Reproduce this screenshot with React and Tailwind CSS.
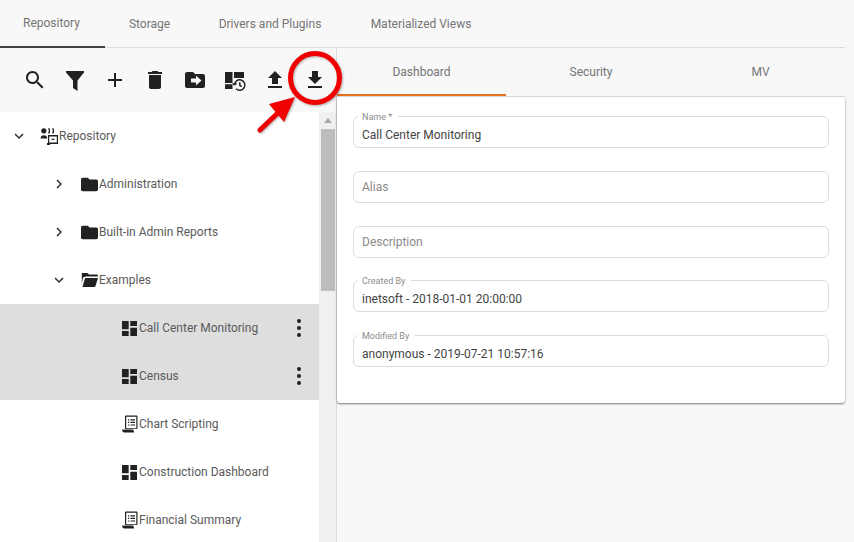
import React from "react";

const MaterialIcon = ({ d, size = 24, viewBox = "0 0 24 24", className = "" }) => (
  <svg width={size} height={size} viewBox={viewBox} fill="currentColor" fillRule="evenodd" className={className}>
    <path d={d} />
  </svg>
);

const paths = {
  search:
    "M15.5 14h-.79l-.28-.27C15.41 12.59 16 11.11 16 9.5 16 5.91 13.09 3 9.5 3S3 5.91 3 9.5 5.91 16 9.5 16c1.61 0 3.09-.59 4.23-1.57l.27.28v.79l5 4.99L20.49 19l-4.99-5zm-6 0C7.01 14 5 11.99 5 9.5S7.01 5 9.5 5 14 7.01 14 9.5 11.99 14 9.5 14z",
  filter: "M3 3h18v1.5L14.5 12.500V23L10 20V12.500L3 4.500z",
  add: "M19 13h-6v6h-2v-6H5v-2h6V5h2v6h6v2z",
  trash: "M6 19c0 1.1.9 2 2 2h8c1.1 0 2-.9 2-2V7H6v12zM19 4h-3.5l-1-1h-5l-1 1H5v2h14V4z",
  moveFolder:
    "M20 6h-8l-2-2H4c-1.1 0-1.99.9-1.99 2L2 18c0 1.1.9 2 2 2h16c1.1 0 2-.9 2-2V8c0-1.1-.9-2-2-2zm-7 11.500v-3H8v-4h5v-3l5.500 5z",
  upload: "M9 16h6v-6h4l-7-7-7 7h4zm-4 2h14v2H5z",
  download: "M19 9h-4V3H9v6H5l7 7 7-7zM5 18h14v2H5z",
  folder: "M10 4H4c-1.1 0-2 .9-2 2v12c0 1.1.9 2 2 2h16c1.1 0 2-.9 2-2V8c0-1.1-.9-2-2-2h-8l-2-2z",
  dashboard: "M3 13h8V3H3v10zm0 8h8v-6H3v6zm10 0h8V11h-8v10zm0-18v6h8V3h-8z",
  down: "M7.41 8.59L12 13.17l4.59-4.58L18 10l-6 6-6-6 1.41-1.41z",
  right: "M10 6L8.59 7.41 13.17 12l-4.58 4.59L10 18l6-6z",
};

const DashboardHistory = () => (
  <svg width="24" height="24" viewBox="0 0 24 24" fill="currentColor">
    <path d="M2 4h7.500v11H2zM2 16.200h7.500V21H2zM11 4h10v6H11z" />
    <path
      d="M11.500 17a5.200 5.200 0 1 1 1.600 3.800M11.500 17l-1.700-1.800M11.500 17l1.900-1.700M16.800 14.200v3.200l2 1.200"
      fill="none"
      stroke="currentColor"
      strokeWidth="1.5"
    />
  </svg>
);

const OpenFolder = () => (
  <svg width="17" height="14" viewBox="0 0 17 14" fill="currentColor">
    <path d="M1.5 0h5l1.5 1.500h7.500c.8 0 1.500.7 1.500 1.500v.5H5L2 4.500 0.800 11V1.200C.8.5 1 0 1.500 0z" />
    <path d="M4 5h13l-2.500 8c-.2.6-.6 1-1.200 1H1.500z" />
  </svg>
);

const RepositoryIcon = () => (
  <svg width="19" height="18" viewBox="0 0 19 18" fill="currentColor">
    <circle cx="3.800" cy="3.800" r="2.600" />
    <path d="M.6 11.500c0-2.200 1.500-3.300 3.200-3.300 1.800 0 3.400 1.100 3.400 3.300z" />
    <path d="M8.500 1.200c1.300 1 1.300 4.200 0 5.200M12.500 1.200c1.300 1 1.300 4.200 0 5.200" fill="none" stroke="currentColor" strokeWidth="1.400" />
    <path d="M9 8h9v9H8V8zm.2 1.500v6h7.600v-6z" fillRule="evenodd" />
    <path d="M11.500 11.700h3v1.200h-3z" />
    <path d="M7 16h3v2H7z" />
  </svg>
);

const ReportIcon = () => (
  <svg width="16" height="18" viewBox="0 0 16 18" fill="currentColor" className="shrink-0">
    <path d="M4 .5h10.500c.6 0 1 .4 1 1v11.500c0 .6-.4 1-1 1H4c-.6 0-1-.4-1-1v-11.500c0-.6.4-1 1-1zm.2 1.200v11.600h10.100V1.700z" fillRule="evenodd" />
    <path d="M6 4.200h1.300v1.200H6zM8.500 4.200H13v1.200H8.500zM6 6.800h1.300V8H6zM8.500 6.800H13V8H8.500zM6 9.400h1.300v1.200H6zM8.500 9.400H13v1.200H8.500z" />
    <path d="M.2 14.500H11c0 .8.400 1.300 1 1.500v1.500H2.200c-1.200 0-2-1.200-2-3z" />
  </svg>
);

const toolbarIcons = [
  <MaterialIcon d={paths.search} />,
  <MaterialIcon d={paths.filter} />,
  <MaterialIcon d={paths.add} />,
  <MaterialIcon d={paths.trash} />,
  <MaterialIcon d={paths.moveFolder} />,
  <DashboardHistory />,
  <MaterialIcon d={paths.upload} />,
  <MaterialIcon d={paths.download} />,
];

const dashboardIcon = <MaterialIcon d={paths.dashboard} size={15} viewBox="3 3 18 18" />;
const reportIcon = <ReportIcon />;
const folderIcon = <MaterialIcon d={paths.folder} size={17} viewBox="2 3 20 18" />;

const treeRows = [
  { label: "Repository", indent: "pl-0", chevron: "down", icon: <RepositoryIcon /> },
  { label: "Administration", indent: "pl-10", chevron: "right", icon: folderIcon },
  { label: "Built-in Admin Reports", indent: "pl-10", chevron: "right", icon: folderIcon },
  { label: "Examples", indent: "pl-10", chevron: "down", icon: <OpenFolder /> },
  { label: "Call Center Monitoring", indent: "pl-20", icon: dashboardIcon, selected: true },
  { label: "Census", indent: "pl-20", icon: dashboardIcon, selected: true },
  { label: "Chart Scripting", indent: "pl-20", icon: reportIcon },
  { label: "Construction Dashboard", indent: "pl-20", icon: dashboardIcon },
  { label: "Financial Summary", indent: "pl-20", icon: reportIcon },
];

const fields = [
  { label: "Name *", value: "Call Center Monitoring" },
  { placeholder: "Alias" },
  { placeholder: "Description" },
  { label: "Created By", value: "inetsoft - 2018-01-01 20:00:00" },
  { label: "Modified By", value: "anonymous - 2019-07-21 10:57:16" },
];

function TreeRow({ row }) {
  return (
    <div className={`flex h-12 shrink-0 items-center text-xs text-[#5a5a5a] ${row.indent} ${row.selected ? "bg-[#dedede]" : ""}`}>
      <div className="flex w-10 shrink-0 justify-center pr-0.5 text-[#333]">
        {row.chevron && <MaterialIcon d={paths[row.chevron]} size={18} />}
      </div>
      <div className="flex w-[19px] shrink-0 justify-center text-[#212121]">{row.icon}</div>
      <span className="flex-1 whitespace-nowrap">{row.label}</span>
      {row.selected && (
        <div className="flex w-10 flex-col items-center gap-[3px]">
          <span className="size-1 rounded-full bg-[#212121]" />
          <span className="size-1 rounded-full bg-[#212121]" />
          <span className="size-1 rounded-full bg-[#212121]" />
        </div>
      )}
    </div>
  );
}

function Field({ field, className }) {
  return (
    <div className={`relative flex h-8 items-center rounded-md border border-[#dcdcdc] px-2 text-xs ${className}`}>
      {field.label && (
        <span className="absolute top-[-5px] left-[4px] bg-white pr-[6px] pl-1 text-[9px] leading-[10px] text-[#8c8c8c]">
          {field.label}
        </span>
      )}
      {field.value ? <span className="pt-[5px] text-[#444]">{field.value}</span> : <span className="text-[#8a8a8a]">{field.placeholder}</span>}
    </div>
  );
}

export default function App() {
  return (
    <div className="relative h-[542px] w-[854px] overflow-hidden bg-[#f8f8f8] font-['Roboto',sans-serif]">
      {/* top tabs */}
      <div className="mr-[9px] flex h-12 border-b border-[#dcdcdc] text-xs text-[#757575]">
        <div className="flex h-12 w-[105px] items-center justify-center border-b-2 border-[#424242] pr-0.5">Repository</div>
        <div className="flex w-[89px] items-center justify-center">Storage</div>
        <div className="flex w-[152px] items-center justify-center">Drivers and Plugins</div>
        <div className="flex w-[150px] items-center justify-center">Materialized Views</div>
      </div>

      <div className="flex h-[494px]">
        {/* left pane */}
        <div className="flex w-[337px] shrink-0 flex-col border-r border-[#dcdcdc]">
          <div className="flex h-16 shrink-0 items-center pl-[15px] text-[#212121]">
            {toolbarIcons.map((icon, i) => (
              <div key={i} className="flex w-10 justify-center">
                {icon}
              </div>
            ))}
          </div>
          <div className="flex min-h-0 flex-1">
            <div className="flex min-w-0 flex-1 flex-col overflow-hidden bg-white">
              {treeRows.map((row) => (
                <TreeRow key={row.label} row={row} />
              ))}
            </div>
            <div className="flex w-[17px] shrink-0 flex-col items-center bg-[#f0f0f0]">
              <div className="mt-[6px] mb-[6px] h-0 w-0 border-x-[4px] border-b-[5px] border-x-transparent border-b-[#a8a8a8]" />
              <div className="h-[162px] w-[14px] bg-[#bdbdbd]" />
            </div>
          </div>
        </div>

        {/* right pane */}
        <div className="mr-[9px] flex-1">
          <div className="flex h-[49px] border-b border-[#dcdcdc] text-xs text-[#757575]">
            <div className="flex w-[169px] items-center justify-center border-b-2 border-[#e8701f] pt-0.5">Dashboard</div>
            <div className="flex w-[170px] items-center justify-center">Security</div>
            <div className="flex w-[169px] items-center justify-center">MV</div>
          </div>
          <div className="flex h-[306px] flex-col rounded-b-[3px] bg-white px-4 pt-[19px] shadow-[0_1px_2px_rgba(0,0,0,0.5)]">
            <Field field={fields[0]} className="mb-[23px]" />
            <Field field={fields[1]} className="mb-[23px]" />
            <Field field={fields[2]} className="mb-[22px]" />
            <Field field={fields[3]} className="mb-[23px]" />
            <Field field={fields[4]} />
          </div>
        </div>
      </div>

      {/* red callout drawn on top of the screenshot */}
      <svg className="absolute top-0 left-0 drop-shadow-[1px_1px_1px_rgba(0,0,0,0.3)]" width="854" height="542" viewBox="0 0 854 542" fill="none">
        <circle cx="315" cy="78" r="24.500" stroke="#f00000" strokeWidth="5" />
        <path d="M260 130L283 108" stroke="#f00000" strokeWidth="5" strokeLinecap="round" />
        <path d="M295 97L269 104L284 122z" fill="#f00000" />
      </svg>
    </div>
  );
}
